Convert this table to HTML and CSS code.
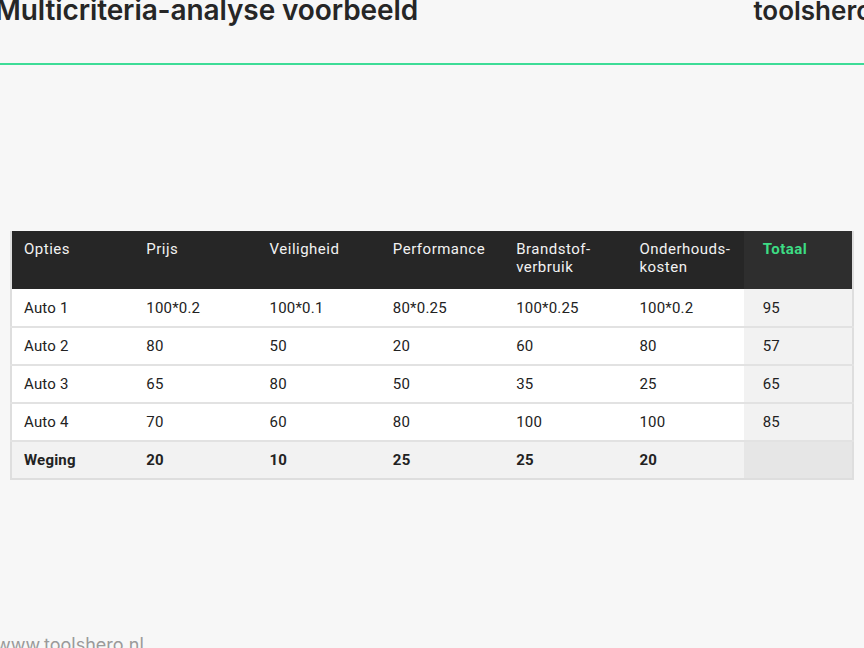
FILE: index.html
```html
<!DOCTYPE html>
<html lang="nl">
<head>
<meta charset="utf-8">
<title>Multicriteria-analyse voorbeeld</title>
<link rel="stylesheet" href="styles.css">
</head>
<body>
<div class="page">
  <header class="top">
    <h1 class="title">Multicriteria-analyse voorbeeld</h1>
    <div class="logo">toolshero</div>
  </header>
  <main class="content">
    <table class="mca">
      <colgroup>
        <col class="c-std"><col class="c-std"><col class="c-std"><col class="c-std"><col class="c-std">
        <col class="c-six"><col class="c-tot">
      </colgroup>
      <thead>
        <tr>
          <th>Opties</th>
          <th>Prijs</th>
          <th>Veiligheid</th>
          <th>Performance</th>
          <th>Brandstof-<br>verbruik</th>
          <th>Onderhouds-<br>kosten</th>
          <th class="tot">Totaal</th>
        </tr>
      </thead>
      <tbody>
        <tr><td>Auto 1</td><td>100*0.2</td><td>100*0.1</td><td>80*0.25</td><td>100*0.25</td><td>100*0.2</td><td class="tot">95</td></tr>
        <tr><td>Auto 2</td><td>80</td><td>50</td><td>20</td><td>60</td><td>80</td><td class="tot">57</td></tr>
        <tr><td>Auto 3</td><td>65</td><td>80</td><td>50</td><td>35</td><td>25</td><td class="tot">65</td></tr>
        <tr><td>Auto 4</td><td>70</td><td>60</td><td>80</td><td>100</td><td>100</td><td class="tot">85</td></tr>
        <tr class="weging"><td>Weging</td><td>20</td><td>10</td><td>25</td><td>25</td><td>20</td><td class="tot"></td></tr>
      </tbody>
    </table>
  </main>
  <footer class="foot">www.toolshero.nl</footer>
</div>
</body>
</html>
```
FILE: styles.css
```css
html, body {
  margin: 0;
  padding: 0;
  background: #f7f7f7;
}
.page {
  width: 864px;
  height: 648px;
  overflow: hidden;
  display: flex;
  flex-direction: column;
  font-family: Roboto, "Liberation Sans", sans-serif;
  color: #222;
}
.top {
  display: flex;
  justify-content: space-between;
  align-items: flex-start;
  height: 63px;
  border-bottom: 2px solid #3ddc97;
  margin-left: -5px;
  margin-right: -8px;
}
.title {
  margin: -7px 0 0 0;
  font-family: Inter, "Open Sans", sans-serif;
  font-weight: 600;
  font-size: 28px;
  letter-spacing: -0.1px;
  color: #262626;
  white-space: nowrap;
}
.logo {
  margin-top: -5px;
  font-family: Inter, "Open Sans", sans-serif;
  font-weight: 600;
  font-size: 26px;
  color: #262626;
}
.content {
  flex: 1;
  padding: 166px 10px 0 10px;
}
.mca {
  width: 844px;
  border-collapse: collapse;
  table-layout: fixed;
  font-size: 15px;
  border: 2px solid #dedede;
  border-top: none;
}
.c-std { width: 123px; }
.c-six { width: 116px; }
.c-tot { width: 109px; }
.mca th, .mca td {
  text-align: left;
  padding: 0 0 0 12px;
}
.mca th.tot, .mca td.tot {
  padding-left: 19px;
}
.mca thead th {
  background: #262626;
  color: #f2f2f2;
  font-weight: 400;
  vertical-align: top;
  height: 58px;
  padding-top: 9px;
  padding-bottom: 0;
  line-height: 18px;
  box-sizing: border-box;
  letter-spacing: 0.5px;
}
.mca thead th.tot {
  background: #2e2e2e;
  color: #3ddc84;
  font-weight: 700;
}
.mca tbody td {
  height: 36px;
  background: #fff;
  border-top: 2px solid #e2e2e2;
  letter-spacing: 0.2px;
}
.mca tbody tr:first-child td {
  border-top: none;
  height: 37px;
}
.mca tbody td.tot {
  background: #f2f2f2;
}
.mca tr.weging td {
  background: #f2f2f2;
  font-weight: 700;
}
.mca tr.weging td.tot {
  background: #e6e6e6;
}
.foot {
  margin-left: -4px;
  font-family: Inter, "Open Sans", sans-serif;
  font-size: 18px;
  color: #9a9a9a;
  height: 18px;
  line-height: 30px;
  overflow: visible;
}
```
